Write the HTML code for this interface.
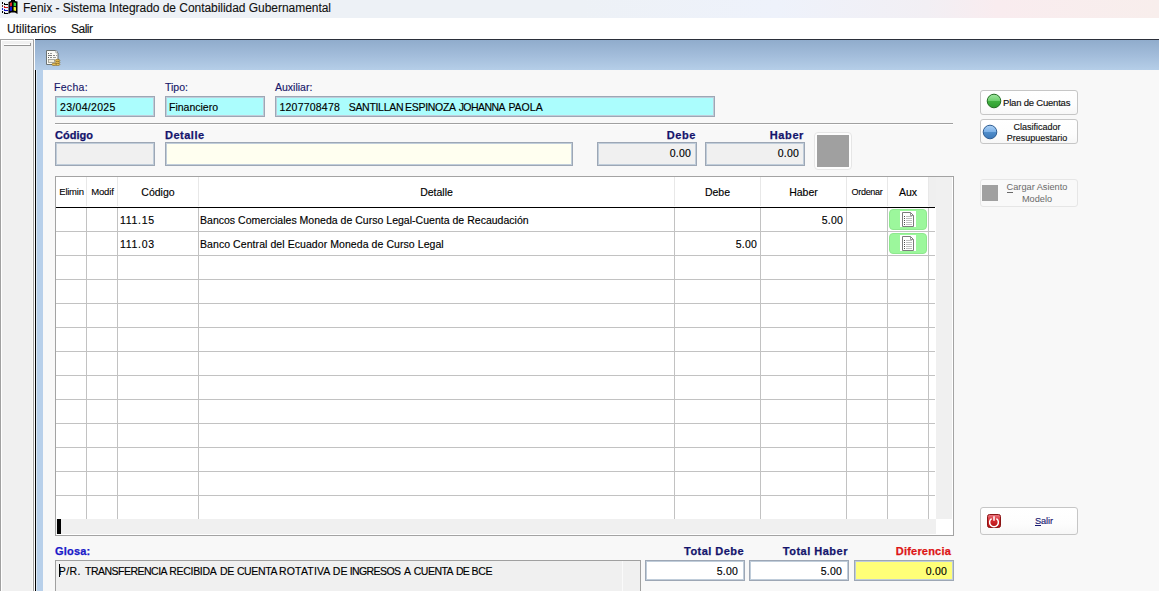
<!DOCTYPE html>
<html><head><meta charset="utf-8">
<style>
*{box-sizing:border-box;margin:0;padding:0}
html,body{width:1159px;height:591px;overflow:hidden;background:#f8f8f8;font-family:"Liberation Sans",sans-serif;color:#000}
.a{position:absolute;white-space:nowrap;line-height:12px}
.lbl{font-size:10.5px;color:#18186a;-webkit-text-stroke:0.15px currentColor}
.blbl{font-size:11px;font-weight:bold;color:#14146c;-webkit-text-stroke:0.25px currentColor}
.inp{position:absolute;border:1px solid #9da7b5;box-shadow:inset 0 0 0 1px #c0cdda}
.txt{font-size:10.5px;color:#000;-webkit-text-stroke:0.15px currentColor}
.hd{font-size:10.5px;color:#000;text-align:center;-webkit-text-stroke:0.15px currentColor}
.sm{font-size:9px;color:#000;text-align:center;-webkit-text-stroke:0.1px #000}
.btn{position:absolute;border:1px solid #c6c6c6;border-radius:3px;background:linear-gradient(180deg,#ffffff 0%,#fdfdfd 60%,#f7f7f7 100%)}
.auxb{position:absolute;width:38px;height:21px;border-radius:4px;background:#9cf79c;border:1px solid #8ee88e}
</style></head><body>
<div class="a" style="left:0;top:0;width:1159px;height:18px;background:linear-gradient(90deg,#edf1f6 0%,#edf1f6 50%,#eef2fb 67%,#f2eff4 80%,#f9ecef 86%,#f8eeec 100%)"></div>
<div class="a" style="left:0;top:18px;width:1159px;height:21px;background:#fff"></div>
<svg class="a" style="left:0px;top:0px" width="20" height="16" viewBox="0 0 20 16">
<rect x="2" y="2" width="1" height="2" fill="#000"/><rect x="2" y="5" width="1" height="2" fill="#6a2a2a"/><rect x="2" y="8" width="1" height="2" fill="#1a1acc"/><rect x="2" y="11" width="1" height="2" fill="#000"/>
<path d="M4 3 H5 V4 H8 V5 H4 Z" fill="#000"/><path d="M4 6 H5 V7 H8 V8 H4 Z" fill="#d01010"/><path d="M4 9 H5 V10 H8 V11 H4 Z" fill="#1010c0"/><path d="M4 12 H5 V13 H8 V14 H4 Z" fill="#000"/>
<path d="M8.5 2 L11 1 V0 H15 V1 L17.5 1.5 V14 L15 12.5 L11 12.5 L8.5 14 Z" fill="#000"/>
<path d="M9.8 3 L12 2.2 V6 L9.8 6.5 Z" fill="#e02828"/>
<path d="M13.6 2.2 L16 3 V6.3 L13.6 6 Z" fill="#30d040"/>
<path d="M9.8 7 L12 6.6 V10.8 L9.8 11 Z" fill="#1818d8"/>
<path d="M13.6 6.8 L16 7.2 V11 L13.6 10.6 Z" fill="#f0f030"/>
</svg>
<div class="a" style="left:23px;top:2px;font-size:12px;letter-spacing:-0.04px;color:#111;-webkit-text-stroke:0.1px #111">Fenix - Sistema Integrado de Contabilidad Gubernamental</div>
<div class="a" style="left:7px;top:23px;font-size:12px;color:#111;-webkit-text-stroke:0.1px #111">Utilitarios</div>
<div class="a" style="left:71px;top:23px;font-size:12px;color:#111;letter-spacing:-0.5px;-webkit-text-stroke:0.1px #111">Salir</div>
<div class="a" style="left:0;top:39px;width:34px;height:552px;background:#f0f0f0;border-left:1px solid #a0a0a0;border-right:1px solid #a0a0a0;border-top:1px solid #a0a0a0"></div>
<div class="a" style="left:1px;top:40px;width:32px;height:1px;background:#fff"></div>
<div class="a" style="left:1px;top:40px;width:1px;height:551px;background:#fff"></div>
<div class="a" style="left:32px;top:40px;width:1px;height:551px;background:#f8f8f8"></div>
<div class="a" style="left:4px;top:44px;width:27px;height:1px;background:#fff"></div>
<div class="a" style="left:4px;top:45px;width:27px;height:1px;background:#969696"></div>
<div class="a" style="left:30px;top:43px;width:1px;height:3px;background:#969696"></div>
<div class="a" style="left:34px;top:39px;width:1px;height:552px;background:#fff"></div>
<div class="a" style="left:35px;top:39px;width:1124px;height:1px;background:#2b2f3a"></div>
<div class="a" style="left:35px;top:40px;width:1124px;height:30px;background:linear-gradient(180deg,#90accc 0%,#a2bcda 50%,#b5cee8 100%)"></div>
<div class="a" style="left:35px;top:70px;width:1px;height:521px;background:#000"></div>
<div class="a" style="left:36px;top:70px;width:1px;height:521px;background:#dce8f4"></div>
<div class="a" style="left:37px;top:70px;width:6px;height:521px;background:#b8d0ea"></div>
<div class="a" style="left:43px;top:70px;width:1116px;height:521px;background:#f8f8f8"></div>
<svg class="a" style="left:46px;top:50px" width="15" height="17" viewBox="0 0 15 17">
<path d="M0.5 0.5 H9.5 L12 3 V14.5 H0.5 Z" fill="#fafaf6" stroke="#6c7474"/>
<circle cx="10.6" cy="1.9" r="1" fill="#fff" stroke="#6c7474" stroke-width=".6"/>
<g fill="#5a5a5a"><rect x="2" y="3" width="1" height="1"/><rect x="4" y="3" width="2" height="1" opacity=".6"/><rect x="2" y="5" width="4" height="1" opacity=".8"/><rect x="7" y="5" width="2" height="1" opacity=".7"/><rect x="10" y="5" width="1" height="1" opacity=".6"/><rect x="2" y="7" width="1" height="1"/><rect x="4" y="7" width="2" height="1" opacity=".7"/><rect x="7" y="7" width="3" height="1" opacity=".6"/></g>
<rect x="2.5" y="9.5" width="6" height="3" fill="#f2eedc" stroke="#8c8c82" stroke-width=".7"/>
<g fill="#e9c25a" stroke="#7a5a12" stroke-width=".6"><ellipse cx="11.5" cy="10.4" rx="2.4" ry="1.1"/><ellipse cx="11.5" cy="12.4" rx="2.4" ry="1.1"/><ellipse cx="11.5" cy="14.4" rx="2.4" ry="1.1"/><ellipse cx="8" cy="14.4" rx="2.2" ry="1.1"/></g>
</svg>
<div class="a lbl" style="left:54px;top:81px;letter-spacing:0.3px">Fecha:</div>
<div class="a lbl" style="left:165px;top:81px">Tipo:</div>
<div class="a lbl" style="left:275px;top:81px">Auxiliar:</div>
<div class="inp" style="left:55px;top:96px;width:100px;height:21px;background:#abfdfd"></div>
<div class="inp" style="left:165px;top:96px;width:100px;height:21px;background:#abfdfd"></div>
<div class="inp" style="left:275px;top:96px;width:440px;height:21px;background:#abfdfd"></div>
<div class="a txt" style="left:60px;top:101px;letter-spacing:0.3px">23/04/2025</div>
<div class="a txt" style="left:169px;top:101px">Financiero</div>
<div class="a txt" style="left:279.5px;top:101px;letter-spacing:0.211px">1207708478</div>
<div class="a txt" style="left:348.7px;top:101px;letter-spacing:-0.3px">SANTILLAN</div>
<div class="a txt" style="left:405.0px;top:101px;letter-spacing:-0.286px">ESPINOZA</div>
<div class="a txt" style="left:458.7px;top:101px;letter-spacing:-0.567px">JOHANNA</div>
<div class="a txt" style="left:508.4px;top:101px;letter-spacing:0.0px">PAOLA</div>
<div class="a" style="left:55px;top:123px;width:898px;height:1px;background:#a0a0a0"></div>
<div class="a" style="left:55px;top:124px;width:898px;height:1px;background:#fff"></div>
<div class="a blbl" style="left:55px;top:129px">Código</div>
<div class="a blbl" style="left:165px;top:129px;letter-spacing:0.5px">Detalle</div>
<div class="a blbl" style="left:596px;top:129px;width:100px;text-align:right;letter-spacing:0.6px">Debe</div>
<div class="a blbl" style="left:704px;top:129px;width:100px;text-align:right;letter-spacing:0.6px">Haber</div>
<div class="inp" style="left:55px;top:142px;width:100px;height:24px;background:#f0f0f0"></div>
<div class="inp" style="left:165px;top:142px;width:408px;height:24px;background:#fffff0"></div>
<div class="inp" style="left:597px;top:142px;width:100px;height:24px;background:#f0f0f0"></div>
<div class="inp" style="left:705px;top:142px;width:100px;height:24px;background:#f0f0f0"></div>
<div class="a txt" style="left:597px;top:147px;width:94px;text-align:right;letter-spacing:0.2px">0.00</div>
<div class="a txt" style="left:705px;top:147px;width:94px;text-align:right;letter-spacing:0.2px">0.00</div>
<div class="a" style="left:814px;top:132px;width:38px;height:38px;border:1px solid #e6e6e6;border-radius:4px;background:#fdfdfd"></div>
<div class="a" style="left:817px;top:135px;width:32px;height:32px;background:#a0a0a0"></div>
<div class="a" style="left:55px;top:176px;width:899px;height:360px;border:1px solid #a3a3a3;background:#fff"></div>
<div class="a" style="left:86px;top:177px;width:1px;height:29px;background:#e8e8e8"></div>
<div class="a" style="left:117px;top:177px;width:1px;height:29px;background:#e8e8e8"></div>
<div class="a" style="left:198px;top:177px;width:1px;height:29px;background:#e8e8e8"></div>
<div class="a" style="left:674px;top:177px;width:1px;height:29px;background:#e8e8e8"></div>
<div class="a" style="left:760px;top:177px;width:1px;height:29px;background:#e8e8e8"></div>
<div class="a" style="left:846px;top:177px;width:1px;height:29px;background:#e8e8e8"></div>
<div class="a" style="left:887px;top:177px;width:1px;height:29px;background:#e8e8e8"></div>
<div class="a" style="left:928px;top:177px;width:1px;height:29px;background:#e8e8e8"></div>
<div class="a" style="left:86px;top:208px;width:1px;height:311px;background:#c2c2c2"></div>
<div class="a" style="left:117px;top:208px;width:1px;height:311px;background:#c2c2c2"></div>
<div class="a" style="left:198px;top:208px;width:1px;height:311px;background:#c2c2c2"></div>
<div class="a" style="left:674px;top:208px;width:1px;height:311px;background:#c2c2c2"></div>
<div class="a" style="left:760px;top:208px;width:1px;height:311px;background:#c2c2c2"></div>
<div class="a" style="left:846px;top:208px;width:1px;height:311px;background:#c2c2c2"></div>
<div class="a" style="left:887px;top:208px;width:1px;height:311px;background:#c2c2c2"></div>
<div class="a" style="left:928px;top:208px;width:1px;height:311px;background:#c2c2c2"></div>
<div class="a" style="left:56px;top:207px;width:879px;height:1px;background:#000"></div>
<div class="a" style="left:56px;top:231px;width:879px;height:1px;background:#c2c2c2"></div>
<div class="a" style="left:56px;top:255px;width:879px;height:1px;background:#c2c2c2"></div>
<div class="a" style="left:56px;top:279px;width:879px;height:1px;background:#c2c2c2"></div>
<div class="a" style="left:56px;top:303px;width:879px;height:1px;background:#c2c2c2"></div>
<div class="a" style="left:56px;top:327px;width:879px;height:1px;background:#c2c2c2"></div>
<div class="a" style="left:56px;top:351px;width:879px;height:1px;background:#c2c2c2"></div>
<div class="a" style="left:56px;top:375px;width:879px;height:1px;background:#c2c2c2"></div>
<div class="a" style="left:56px;top:399px;width:879px;height:1px;background:#c2c2c2"></div>
<div class="a" style="left:56px;top:423px;width:879px;height:1px;background:#c2c2c2"></div>
<div class="a" style="left:56px;top:447px;width:879px;height:1px;background:#c2c2c2"></div>
<div class="a" style="left:56px;top:471px;width:879px;height:1px;background:#c2c2c2"></div>
<div class="a" style="left:56px;top:495px;width:879px;height:1px;background:#c2c2c2"></div>
<div class="a" style="left:929px;top:177px;width:7px;height:30px;background:#efefef"></div>
<div class="a" style="left:936px;top:177px;width:16px;height:342px;background:#f0f0f0"></div>
<div class="a" style="left:56px;top:519px;width:880px;height:15px;background:#f0f0f0"></div>
<div class="a" style="left:57px;top:519px;width:4px;height:15px;background:#000"></div>
<div class="a sm" style="left:56px;top:186px;width:31px;font-size:9.5px;letter-spacing:-0.25px">Elimin</div>
<div class="a sm" style="left:87px;top:186px;width:31px;font-size:9.5px;letter-spacing:-0.1px">Modif</div>
<div class="a hd" style="left:118px;top:186px;width:80px">Código</div>
<div class="a hd" style="left:199px;top:186px;width:475px">Detalle</div>
<div class="a hd" style="left:675px;top:186px;width:85px">Debe</div>
<div class="a hd" style="left:761px;top:186px;width:85px">Haber</div>
<div class="a sm" style="left:847px;top:186px;width:40px;letter-spacing:-0.3px">Ordenar</div>
<div class="a hd" style="left:888px;top:186px;width:40px">Aux</div>
<div class="a txt" style="left:120px;top:214px;letter-spacing:0.7px">111.15</div>
<div class="a txt" style="left:200px;top:214px;letter-spacing:0.02px">Bancos Comerciales Moneda de Curso Legal-Cuenta de Recaudación</div>
<div class="a txt" style="left:761px;top:214px;width:82px;text-align:right;letter-spacing:0.2px">5.00</div>
<div class="a txt" style="left:120px;top:238px;letter-spacing:0.7px">111.03</div>
<div class="a txt" style="left:200px;top:238px;letter-spacing:0.07px">Banco Central del Ecuador Moneda de Curso Legal</div>
<div class="a txt" style="left:675px;top:238px;width:82px;text-align:right;letter-spacing:0.2px">5.00</div>
<div class="auxb" style="left:889px;top:209px"><svg width="38" height="21" viewBox="0 0 38 21" style="position:absolute;left:-1px;top:-1px"><rect x="11" y="2" width="16" height="16" fill="#fff"/><path d="M13.5 3.5 H21.5 L24.5 6.5 V17.5 H13.5 Z" fill="#fff" stroke="#7c7c7c"/><path d="M21.5 3.5 L21.5 6.5 L24.5 6.5" fill="none" stroke="#7c7c7c" stroke-width=".8"/><g fill="#505050"><rect x="15" y="7" width="1" height="1"/><rect x="15" y="9" width="1" height="1"/><rect x="15" y="11" width="1" height="1"/><rect x="15" y="13" width="1" height="1"/><rect x="15" y="15" width="1" height="1"/></g><g fill="#c0c0c0"><rect x="17" y="7" width="6" height="1"/><rect x="17" y="9" width="6" height="1"/><rect x="17" y="11" width="6" height="1"/><rect x="17" y="13" width="6" height="1"/><rect x="17" y="15" width="6" height="1"/></g></svg></div>
<div class="auxb" style="left:889px;top:233px"><svg width="38" height="21" viewBox="0 0 38 21" style="position:absolute;left:-1px;top:-1px"><rect x="11" y="2" width="16" height="16" fill="#fff"/><path d="M13.5 3.5 H21.5 L24.5 6.5 V17.5 H13.5 Z" fill="#fff" stroke="#7c7c7c"/><path d="M21.5 3.5 L21.5 6.5 L24.5 6.5" fill="none" stroke="#7c7c7c" stroke-width=".8"/><g fill="#505050"><rect x="15" y="7" width="1" height="1"/><rect x="15" y="9" width="1" height="1"/><rect x="15" y="11" width="1" height="1"/><rect x="15" y="13" width="1" height="1"/><rect x="15" y="15" width="1" height="1"/></g><g fill="#c0c0c0"><rect x="17" y="7" width="6" height="1"/><rect x="17" y="9" width="6" height="1"/><rect x="17" y="11" width="6" height="1"/><rect x="17" y="13" width="6" height="1"/><rect x="17" y="15" width="6" height="1"/></g></svg></div>
<div class="btn" style="left:980px;top:90px;width:98px;height:25px"></div>
<svg class="a" style="left:986px;top:93px" width="16" height="16" viewBox="0 0 16 16"><defs><linearGradient id="gg" x1="0" y1="0" x2="0" y2="1"><stop offset="0" stop-color="#a0e6a0"/><stop offset=".48" stop-color="#70d070"/><stop offset=".52" stop-color="#40b040"/><stop offset="1" stop-color="#2f9c2f"/></linearGradient></defs><circle cx="8" cy="8" r="6.8" fill="url(#gg)" stroke="#236e23" stroke-width="1"/></svg>
<div class="a" style="left:1003px;top:97px;font-size:9.5px;color:#111;letter-spacing:-0.2px;-webkit-text-stroke:0.15px #111">Plan de Cuentas</div>
<div class="btn" style="left:980px;top:119px;width:98px;height:25px"></div>
<svg class="a" style="left:982px;top:124px" width="16" height="16" viewBox="0 0 16 16"><defs><linearGradient id="bg2" x1="0" y1="0" x2="0" y2="1"><stop offset="0" stop-color="#acd0f4"/><stop offset=".48" stop-color="#7eb2e8"/><stop offset=".52" stop-color="#508dca"/><stop offset="1" stop-color="#3c78b8"/></linearGradient></defs><circle cx="8" cy="8" r="6.8" fill="url(#bg2)" stroke="#2f5d92" stroke-width="1"/></svg>
<div class="a" style="left:998px;top:122px;width:78px;text-align:center;font-size:9px;color:#111;line-height:10.5px;-webkit-text-stroke:0.15px #111">Clasificador<br>Presupuestario</div>
<div class="btn" style="left:980px;top:179px;width:98px;height:28px;background:#f9f9f9;border-color:#e6e6e6"></div>
<div class="a" style="left:982px;top:185px;width:16px;height:16px;background:#a0a0a0"></div>
<div class="a" style="left:998px;top:181px;width:78px;text-align:center;font-size:9.2px;color:#6a6a6a">Cargar Asiento</div>
<div class="a" style="left:998px;top:192.5px;width:78px;text-align:center;font-size:9.2px;color:#6a6a6a">Modelo</div>
<div class="a" style="left:1007px;top:192px;width:6px;height:1px;background:#6a6a6a"></div>
<div class="btn" style="left:980px;top:507px;width:98px;height:28px"></div>
<svg class="a" style="left:987px;top:514px" width="14" height="14" viewBox="0 0 14 14"><defs><linearGradient id="rg" x1="0" y1="0" x2="0" y2="1"><stop offset="0" stop-color="#ec7a84"/><stop offset=".45" stop-color="#d42a30"/><stop offset="1" stop-color="#b01010"/></linearGradient></defs><rect x=".5" y=".5" width="13" height="13" rx="2" fill="url(#rg)" stroke="#8a1515"/><path d="M4.6 4.6 A4.4 4.4 0 1 0 9.4 4.6" fill="none" stroke="#fff" stroke-width="1.5"/><path d="M7 2.3 V6.8" stroke="#fff" stroke-width="1.5"/></svg>
<div class="a" style="left:1035px;top:514.5px;font-size:9.2px;color:#1a1a72;-webkit-text-stroke:0.15px #1a1a72;letter-spacing:-0.1px">Salir</div>
<div class="a" style="left:1035px;top:525px;width:6px;height:1px;background:#1a1a72"></div>
<div class="a blbl" style="left:55px;top:545px;color:#1a1ac8;letter-spacing:0.2px">Glosa:</div>
<div class="a blbl" style="left:644px;top:545px;width:100px;text-align:right;letter-spacing:0.45px">Total Debe</div>
<div class="a blbl" style="left:748px;top:545px;width:100px;text-align:right;letter-spacing:0.5px">Total Haber</div>
<div class="a blbl" style="left:851px;top:545px;width:100px;text-align:right;color:#dd1515;letter-spacing:0.2px">Diferencia</div>
<div class="a" style="left:55px;top:560px;width:586px;height:40px;background:#f0f0f0;border:1px solid #a0a0a0"></div>
<div class="a" style="left:622px;top:561px;width:1px;height:40px;background:#fafafa"></div>
<div class="a" style="left:59px;top:564px;width:1px;height:13px;background:#000"></div>
<div class="a txt" style="left:58.7px;top:565px;letter-spacing:0.467px">P/R.</div>
<div class="a txt" style="left:85.0px;top:565px;letter-spacing:-0.508px">TRANSFERENCIA</div>
<div class="a txt" style="left:169.2px;top:565px;letter-spacing:-0.286px">RECIBIDA</div>
<div class="a txt" style="left:219.9px;top:565px;letter-spacing:-0.3px">DE</div>
<div class="a txt" style="left:236.9px;top:565px;letter-spacing:-0.36px">CUENTA</div>
<div class="a txt" style="left:279.0px;top:565px;letter-spacing:0.171px">ROTATIVA</div>
<div class="a txt" style="left:332.8px;top:565px;letter-spacing:0.2px">DE</div>
<div class="a txt" style="left:349.7px;top:565px;letter-spacing:-0.586px">INGRESOS</div>
<div class="a txt" style="left:404.0px;top:565px;letter-spacing:0.0px">A</div>
<div class="a txt" style="left:413.8px;top:565px;letter-spacing:-0.52px">CUENTA</div>
<div class="a txt" style="left:455.9px;top:565px;letter-spacing:-0.7px">DE</div>
<div class="a txt" style="left:471.5px;top:565px;letter-spacing:-0.25px">BCE</div>
<div class="inp" style="left:645px;top:560px;width:100px;height:21px;background:#fff"></div>
<div class="inp" style="left:749px;top:560px;width:100px;height:21px;background:#fff"></div>
<div class="inp" style="left:854px;top:560px;width:100px;height:21px;background:#ffff78"></div>
<div class="a txt" style="left:645px;top:565px;width:93px;text-align:right;letter-spacing:0.2px">5.00</div>
<div class="a txt" style="left:749px;top:565px;width:93px;text-align:right;letter-spacing:0.2px">5.00</div>
<div class="a txt" style="left:854px;top:565px;width:93px;text-align:right;letter-spacing:0.2px">0.00</div>
</body></html>
